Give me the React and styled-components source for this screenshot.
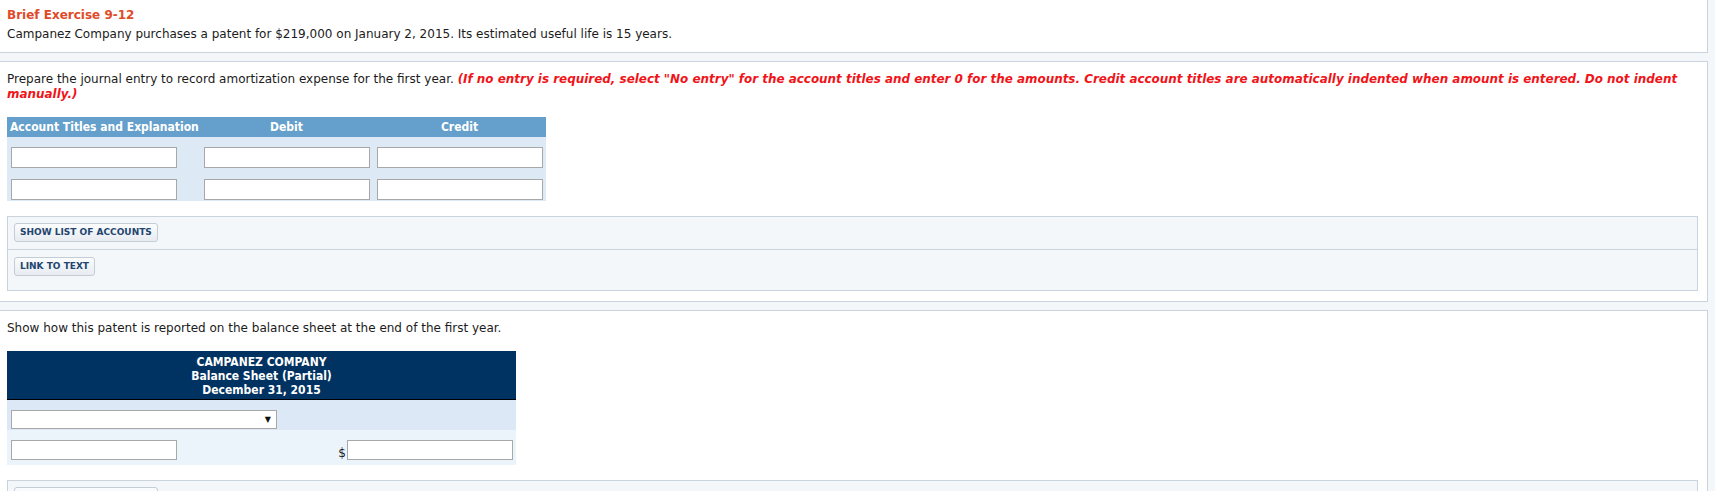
import React from "react"
import styled, { createGlobalStyle } from "styled-components"

const GlobalStyle = createGlobalStyle`
  body {
    margin: 0;
    background: #f4f7fa;
    font-family: "DejaVu Sans", Verdana, sans-serif;
    font-size: 12px;
    color: #1b1b1b;
  }
`

const Page = styled.div`
  margin-right: 7px;
`

const Panel = styled.section`
  background: #ffffff;
  border: 1px solid #c9d4df;
  border-left: none;
  border-top: ${(p) => (p.$first ? "none" : "1px solid #c9d4df")};
  margin-top: ${(p) => (p.$first ? "0" : "8px")};
  padding: ${(p) => (p.$first ? "8px 7px 11px" : "10px 9px 10px 7px")};
`

const Title = styled.h2`
  margin: 0 0 5px;
  font-size: 12px;
  line-height: 14px;
  font-weight: bold;
  color: #e14a28;
`

const Text = styled.p`
  margin: 0;
  line-height: 14px;
`

const Prompt = styled.p`
  margin: 0 0 15px;
  line-height: 15px;
`

const Note = styled.span`
  color: #f01419;
  font-weight: bold;
  font-style: italic;
  font-size: 11.95px;
`

const Journal = styled.div`
  width: 539px;
  background: #dde9f5;
`

const JournalRow = styled.div`
  display: grid;
  grid-template-columns: 193px 173px 173px;
  height: ${(p) => (p.$head ? "20px" : "32px")};
  background: ${(p) => (p.$head ? "#659fcb" : "transparent")};
  align-items: ${(p) => (p.$head ? "center" : "end")};
  padding-bottom: ${(p) => (p.$head ? "0" : "1px")};
  box-sizing: border-box;
`

const HeadCell = styled.div`
  font-family: "DejaVu Sans Condensed", "DejaVu Sans", sans-serif;
  font-weight: bold;
  font-size: 12px;
  color: #ffffff;
  text-align: ${(p) => p.$align || "center"};
  padding-left: ${(p) => (p.$align === "left" ? "3px" : "0")};
`

const Field = styled.input`
  box-sizing: border-box;
  width: 166px;
  height: ${(p) => p.$h || 21}px;
  margin: 0 0 0 ${(p) => (p.$flush ? 0 : 4)}px;
  padding: 0 3px;
  border: 1px solid #a8a8a8;
  background: #ffffff;
  font: inherit;
  outline: none;
`

const ToolBox = styled.div`
  margin-top: 15px;
  background: #f4f7fa;
  border: 1px solid #c9d4df;
`

const ToolRow = styled.div`
  display: flex;
  padding: ${(p) => (p.$last ? "7px 6px 14px" : "6px 6px 7px")};
  border-bottom: ${(p) => (p.$last ? "none" : "1px solid #c9d4df")};
`

const ToolButton = styled.button`
  height: 19px;
  padding: 0 5px;
  border: 1px solid #c4ccd6;
  border-radius: 3px;
  background: linear-gradient(#fbfcfd, #e7ecf1);
  font-family: "DejaVu Sans", Verdana, sans-serif;
  font-size: 9px;
  font-weight: bold;
  line-height: 17px;
  color: #23456f;
  cursor: pointer;
`

const Sheet = styled.div`
  width: 509px;
`

const SheetHead = styled.div`
  background: #013362;
  border-bottom: 1px solid #000000;
  padding: 4px 0 2px;
  text-align: center;
  font-family: "DejaVu Sans Condensed", "DejaVu Sans", sans-serif;
  font-weight: bold;
  font-size: 12px;
  line-height: 14px;
  color: #ffffff;
`

const SheetRow = styled.div`
  display: flex;
  align-items: flex-end;
  justify-content: space-between;
  height: ${(p) => (p.$tall ? "35px" : "30px")};
  padding: ${(p) => (p.$tall ? "10px 3px 5px 0" : "10px 3px 1px 0")};
  box-sizing: border-box;
  background: ${(p) => (p.$tall ? "#ebf3fb" : "#dce8f5")};
`

const SelectBox = styled.div`
  box-sizing: border-box;
  width: 266px;
  height: 19px;
  margin-left: 4px;
  padding-right: 5px;
  display: flex;
  align-items: center;
  justify-content: flex-end;
  background: #ffffff;
  border: 1px solid #a8a8a8;
  font-size: 8px;
  color: #111111;
`

const Amount = styled.div`
  display: flex;
  align-items: flex-end;
  gap: 1px;
`

const Dollar = styled.span`
  line-height: 13px;
`

export default function App() {
  return (
    <Page>
      <GlobalStyle />

      <Panel $first>
        <Title>Brief Exercise 9-12</Title>
        <Text>
          Campanez Company purchases a patent for $219,000 on January 2, 2015. Its estimated useful life is 15
          years.
        </Text>
      </Panel>

      <Panel>
        <Prompt>
          Prepare the journal entry to record amortization expense for the first year.{" "}
          <Note>
            (If no entry is required, select "No entry" for the account titles and enter 0 for the amounts. Credit
            account titles are automatically indented when amount is entered. Do not indent manually.)
          </Note>
        </Prompt>

        <Journal>
          <JournalRow $head>
            <HeadCell $align="left">Account Titles and Explanation</HeadCell>
            <HeadCell>Debit</HeadCell>
            <HeadCell>Credit</HeadCell>
          </JournalRow>
          {[0, 1].map((i) => (
            <JournalRow key={i}>
              <Field />
              <Field />
              <Field />
            </JournalRow>
          ))}
        </Journal>

        <ToolBox>
          <ToolRow>
            <ToolButton>SHOW LIST OF ACCOUNTS</ToolButton>
          </ToolRow>
          <ToolRow $last>
            <ToolButton>LINK TO TEXT</ToolButton>
          </ToolRow>
        </ToolBox>
      </Panel>

      <Panel>
        <Prompt>Show how this patent is reported on the balance sheet at the end of the first year.</Prompt>

        <Sheet>
          <SheetHead>
            <div>CAMPANEZ COMPANY</div>
            <div>Balance Sheet (Partial)</div>
            <div>December 31, 2015</div>
          </SheetHead>
          <SheetRow>
            <SelectBox>▼</SelectBox>
          </SheetRow>
          <SheetRow $tall>
            <Field $h={20} />
            <Amount>
              <Dollar>$</Dollar>
              <Field $h={20} $flush />
            </Amount>
          </SheetRow>
        </Sheet>

        <ToolBox>
          <ToolRow>
            <ToolButton>SHOW LIST OF ACCOUNTS</ToolButton>
          </ToolRow>
          <ToolRow $last>
            <ToolButton>LINK TO TEXT</ToolButton>
          </ToolRow>
        </ToolBox>
      </Panel>
    </Page>
  )
}
